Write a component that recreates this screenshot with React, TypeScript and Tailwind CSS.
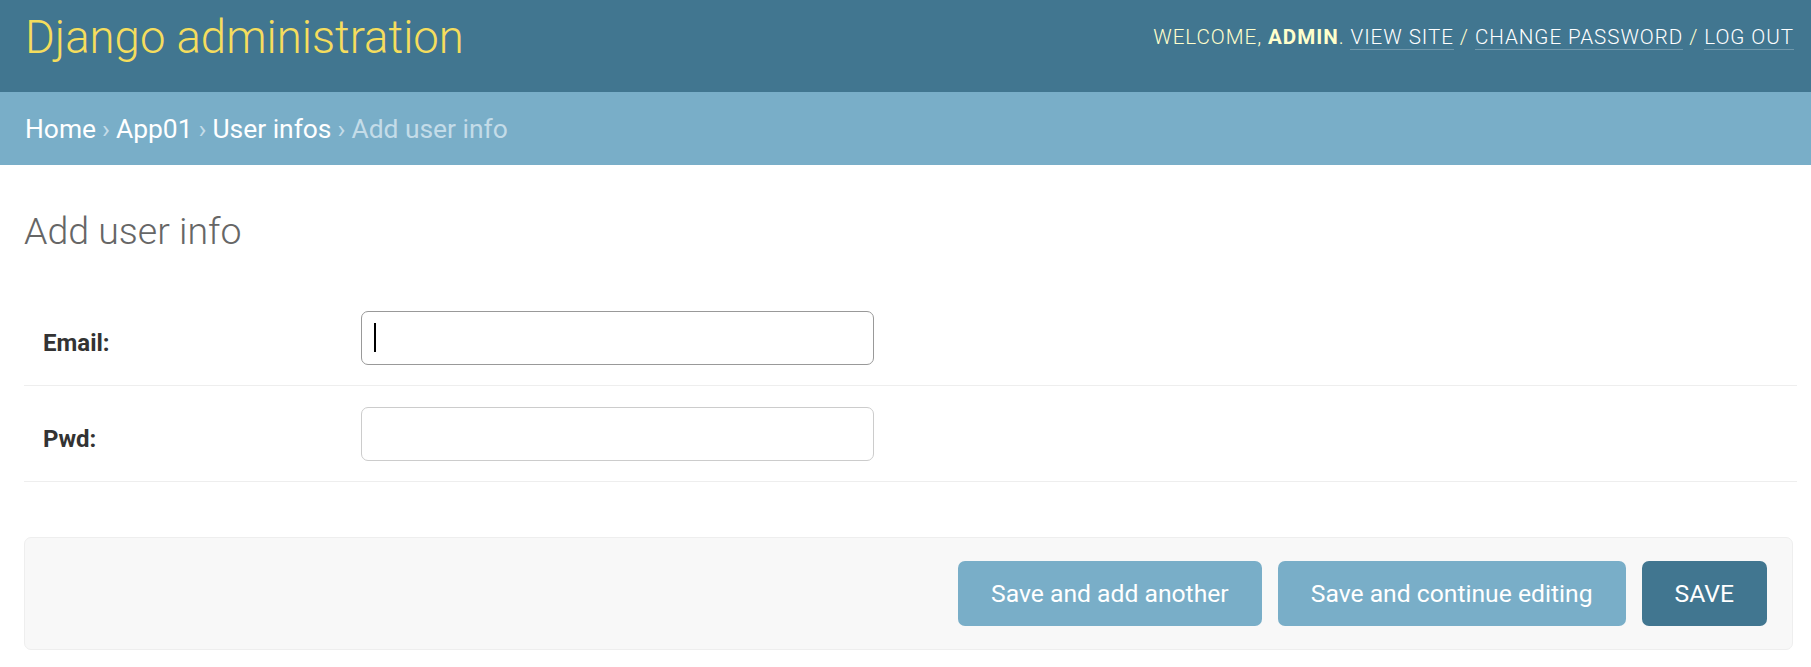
import { useState } from 'react'

const font = { fontFamily: 'Roboto, "Liberation Sans", Arial, sans-serif' }

function Row({
  label,
  value,
  onChange,
  focused,
  type = 'text',
}: {
  label: string
  value: string
  onChange: (v: string) => void
  focused?: boolean
  type?: string
}) {
  return (
    <div className="flex items-center border-b border-[#eee] pl-[19px] pt-[21px] pb-[20px]">
      <label className="w-[318px] shrink-0 pt-[10px] text-[24px] font-bold leading-none text-[#333]">
        {label}
      </label>
      <div className="relative">
        <input
          type={type}
          value={value}
          onChange={(e) => onChange(e.target.value)}
          className={
            focused
              ? 'h-[54px] w-[513px] rounded-[7px] border border-[#999] bg-white px-[11px] text-[24px] text-[#333] caret-transparent outline-none'
              : 'h-[54px] w-[513px] rounded-[7px] border border-[#ccc] bg-white px-[11px] text-[24px] text-[#333] caret-transparent outline-none'
          }
        />
        {/* caret do campo em foco */}
        {focused && value === '' && (
          <span className="pointer-events-none absolute left-[13px] top-[12px] h-[29px] w-[1.5px] bg-black" />
        )}
      </div>
    </div>
  )
}

export default function App() {
  const [form, setForm] = useState({ email: '', pwd: '' })

  return (
    <div className="min-h-screen bg-white" style={font}>
      {/* Header */}
      <header className="flex h-[92px] items-center justify-between bg-[#417690] pb-[17px] pl-[25px] pr-[17px]">
        <h1 className="text-[45.5px] font-light leading-[53px] text-[#f5dd5d]">
          Django administration
        </h1>
        <div className="text-[20.6px] font-light uppercase tracking-[0.95px] text-[#ffc]">
          Welcome, <strong className="font-bold text-[#ffc]">admin</strong>.{' '}
          <a className="border-b border-white/25 text-white">View site</a> /{' '}
          <a className="border-b border-white/25 text-white">Change password</a> /{' '}
          <a className="border-b border-white/25 text-white">Log out</a>
        </div>
      </header>

      {/* Breadcrumbs */}
      <div className="flex h-[73px] items-center bg-[#79aec8] px-[25px] pt-[2px] text-[26.4px] text-[#c4dce8]">
        <a className="text-white">Home</a>
        <span className="mx-[6px]">›</span>
        <a className="text-white">App01</a>
        <span className="mx-[6px]">›</span>
        <a className="text-white">User infos</a>
        <span className="mx-[6px]">›</span>
        <span>Add user info</span>
      </div>

      {/* Conteúdo */}
      <main className="pl-[24px] pr-[14px] pt-[45px]">
        <h2 className="mb-[37px] text-[37.5px] font-light leading-[43px] text-[#666]">
          Add user info
        </h2>

        <form onSubmit={(e) => e.preventDefault()}>
          <Row
            label="Email:"
            value={form.email}
            onChange={(v) => setForm({ ...form, email: v })}
            focused
          />
          <Row
            label="Pwd:"
            value={form.pwd}
            type="password"
            onChange={(v) => setForm({ ...form, pwd: v })}
          />

          <div className="mr-[4px] mt-[55px] flex justify-end gap-[16px] rounded-[7px] border border-[#eee] bg-[#f8f8f8] py-[23px] pr-[25px]">
            <button
              type="submit"
              className="h-[65px] rounded-[7px] bg-[#79aec8] px-[33px] text-[24.7px] text-white"
            >
              Save and add another
            </button>
            <button
              type="submit"
              className="h-[65px] rounded-[7px] bg-[#79aec8] px-[33px] text-[24.7px] text-white"
            >
              Save and continue editing
            </button>
            <button
              type="submit"
              className="h-[65px] rounded-[7px] bg-[#417690] px-[33px] text-[24.7px] uppercase text-white"
            >
              Save
            </button>
          </div>
        </form>
      </main>
    </div>
  )
}
